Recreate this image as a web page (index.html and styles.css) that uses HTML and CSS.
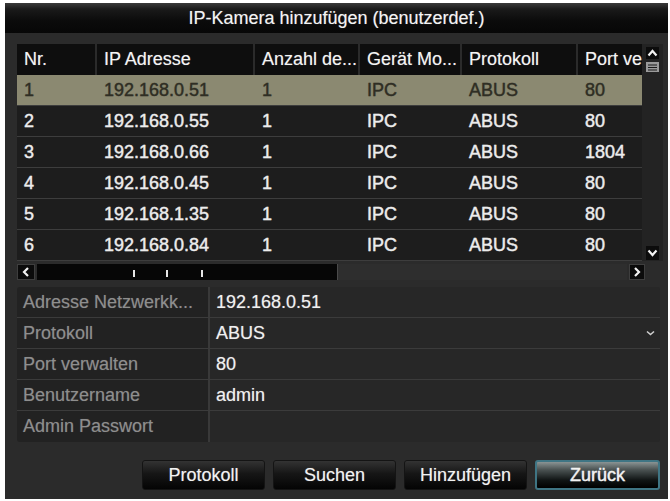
FILE: index.html
```html
<!DOCTYPE html>
<html lang="de">
<head>
<meta charset="utf-8">
<title>IP-Kamera hinzufügen</title>
<link rel="stylesheet" href="styles.css">
</head>
<body>
<div class="win">
  <div class="titlebar">IP-Kamera hinzufügen (benutzerdef.)</div>
  <div class="content">
    <div class="list">
      <div class="grid">
        <div class="row head">
          <div class="c">Nr.</div>
          <div class="c">IP Adresse</div>
          <div class="c">Anzahl de...</div>
          <div class="c">Gerät Mo...</div>
          <div class="c">Protokoll</div>
          <div class="c">Port ve</div>
        </div>
        <div class="row sel">
          <div class="c">1</div><div class="c">192.168.0.51</div><div class="c">1</div><div class="c">IPC</div><div class="c">ABUS</div><div class="c">80</div>
        </div>
        <div class="row">
          <div class="c">2</div><div class="c">192.168.0.55</div><div class="c">1</div><div class="c">IPC</div><div class="c">ABUS</div><div class="c">80</div>
        </div>
        <div class="row">
          <div class="c">3</div><div class="c">192.168.0.66</div><div class="c">1</div><div class="c">IPC</div><div class="c">ABUS</div><div class="c">1804</div>
        </div>
        <div class="row">
          <div class="c">4</div><div class="c">192.168.0.45</div><div class="c">1</div><div class="c">IPC</div><div class="c">ABUS</div><div class="c">80</div>
        </div>
        <div class="row">
          <div class="c">5</div><div class="c">192.168.1.35</div><div class="c">1</div><div class="c">IPC</div><div class="c">ABUS</div><div class="c">80</div>
        </div>
        <div class="row">
          <div class="c">6</div><div class="c">192.168.0.84</div><div class="c">1</div><div class="c">IPC</div><div class="c">ABUS</div><div class="c">80</div>
        </div>
      </div>
      <div class="vscroll">
        <div class="sbtn up">
          <svg width="11" height="8" viewBox="0 0 11 8"><path d="M1.5 6.5 L5.5 2 L9.5 6.5" fill="none" stroke="#f2f2f2" stroke-width="2.2"/></svg>
        </div>
        <div class="vthumb">
          <svg width="9" height="7" viewBox="0 0 9 7"><path d="M0 1H9M0 3.5H9M0 6H9" stroke="#1a1a1a" stroke-width="1.2"/></svg>
        </div>
        <div class="vspace"></div>
        <div class="sbtn down">
          <svg width="11" height="8" viewBox="0 0 11 8"><path d="M1.5 1.5 L5.5 6 L9.5 1.5" fill="none" stroke="#f2f2f2" stroke-width="2.2"/></svg>
        </div>
      </div>
    </div>
    <div class="hscroll">
      <div class="hbtn">
        <svg width="8" height="10" viewBox="0 0 8 10"><path d="M6 1 L2 5 L6 9" fill="none" stroke="#f2f2f2" stroke-width="2.2"/></svg>
      </div>
      <div class="hthumb">
        <span class="tick t1"></span><span class="tick t2"></span><span class="tick t3"></span>
      </div>
      <div class="htrack"></div>
      <div class="hbtn">
        <svg width="8" height="10" viewBox="0 0 8 10"><path d="M2 1 L6 5 L2 9" fill="none" stroke="#f2f2f2" stroke-width="2.2"/></svg>
      </div>
    </div>
    <div class="form">
      <div class="frow"><div class="lab">Adresse Netzwerkk...</div><div class="val">192.168.0.51</div></div>
      <div class="frow"><div class="lab">Protokoll</div><div class="val">ABUS<svg class="dd" width="9" height="6" viewBox="0 0 9 6"><path d="M1 1.5 L4.5 4.5 L8 1.5" fill="none" stroke="#cfcfcf" stroke-width="1.6"/></svg></div></div>
      <div class="frow"><div class="lab">Port verwalten</div><div class="val">80</div></div>
      <div class="frow"><div class="lab">Benutzername</div><div class="val">admin</div></div>
      <div class="frow"><div class="lab">Admin Passwort</div><div class="val"></div></div>
    </div>
    <div class="buttons">
      <div class="btn">Protokoll</div>
      <div class="btn">Suchen</div>
      <div class="btn">Hinzufügen</div>
      <div class="btn active">Zurück</div>
    </div>
  </div>
</div>
</body>
</html>
```
FILE: styles.css
```css
html, body {
  margin: 0;
  padding: 0;
  background: #ffffff;
}
body {
  padding: 3px 2px 2px 5px;
  font-family: "Liberation Sans", Arial, sans-serif;
  font-size: 18px;
  color: #ececec;
}
.win {
  width: 663px;
  height: 496px;
  background: #2b2b2b;
  display: flex;
  flex-direction: column;
}
.titlebar {
  height: 30px;
  line-height: 30px;
  text-align: center;
  color: #f4f4f4;
  background: linear-gradient(#3a3a3a 0, #1a1a1a 20%, #0b0b0b 60%, #070707 100%);
  text-shadow: 0 0 1px rgba(255,255,255,0.4);
}
.content {
  padding: 11px 0 0 12px;
  display: flex;
  flex-direction: column;
}
.list {
  display: flex;
}
.grid {
  width: 625px;
  display: flex;
  flex-direction: column;
}
.row {
  display: grid;
  grid-template-columns: 80px 158px 105px 102px 116px 64px;
  height: 30px;
  border-bottom: 1px solid #3d3d3d;
  background: #1d1d1d;
  align-items: center;
}
.row .c {
  padding-left: 7px;
  white-space: nowrap;
  overflow: hidden;
  -webkit-text-stroke: 0.3px currentColor;
  text-shadow: 0 0 1px rgba(255,255,255,0.4);
}
.row.head {
  height: 31px;
  border-bottom: none;
  background: transparent;
  align-items: stretch;
}
.row.head .c {
  background: #0e0e0e;
  border-right: 2px solid #2b2b2b;
  display: flex;
  align-items: center;
  color: #f4f4f4;
  -webkit-text-stroke: 0;
}
.row.head .c:last-child {
  border-right: none;
}
.row.sel {
  background: #8b8971;
  color: #2f2e24;
}
.row.sel .c {
  text-shadow: 0 0 1px rgba(40,40,30,0.4);
}
.vscroll {
  width: 21px;
  background: #232323;
  display: flex;
  flex-direction: column;
  align-items: center;
  padding-top: 3px;
  box-sizing: border-box;
}
.sbtn {
  width: 13px;
  height: 12px;
  background: #0c0c0c;
  display: flex;
  align-items: center;
  justify-content: center;
}
.vthumb {
  width: 13px;
  height: 10px;
  margin-top: 3px;
  background: #9a9a9a;
  display: flex;
  align-items: center;
  justify-content: center;
}
.vspace {
  flex: 1;
}
.sbtn.down {
  margin-bottom: 1px;
  height: 14px;
}
.hscroll {
  margin-top: 3px;
  width: 628px;
  height: 16px;
  display: flex;
}
.hbtn {
  width: 18px;
  background: #0b0b0b;
  border: 1px solid #3e3e3e;
  box-sizing: border-box;
  display: flex;
  align-items: center;
  justify-content: center;
}
.hbtn:last-child {
  width: 16px;
  margin-left: 2px;
}
.hthumb {
  width: 300px;
  margin-left: 2px;
  background: #060606;
  position: relative;
}
.tick {
  position: absolute;
  top: 6px;
  width: 2px;
  height: 7px;
  background: #e6e6e6;
}
.t1 { left: 96px; }
.t2 { left: 129px; }
.t3 { left: 164px; }
.htrack {
  flex: 1;
  background: #2e2e2e;
  border-left: 1px solid #4a4a4a;
}
.form {
  margin-top: 7px;
  width: 643px;
  border-radius: 3px;
  overflow: hidden;
  display: flex;
  flex-direction: column;
}
.frow {
  display: flex;
  height: 30px;
  border-bottom: 1px solid #3b3b3b;
}
.frow:last-child {
  border-bottom: none;
  height: 31px;
}
.lab {
  width: 193px;
  background: #222222;
  border-right: 2px solid #393939;
  color: #8e8e8e;
  padding-left: 6px;
  box-sizing: border-box;
  display: flex;
  align-items: center;
  white-space: nowrap;
  text-shadow: 0 0 1px rgba(150,150,150,0.4);
}
.val {
  flex: 1;
  background: #272727;
  padding-left: 6px;
  display: flex;
  align-items: center;
  color: #f0f0f0;
  text-shadow: 0 0 1px rgba(255,255,255,0.45);
}
.dd {
  margin-left: auto;
  margin-right: 5px;
}
.buttons {
  margin-top: 18px;
  width: 643px;
  display: flex;
  justify-content: flex-end;
  gap: 8px;
}
.btn {
  width: 123px;
  height: 30px;
  box-sizing: border-box;
  border: 1px solid #141414;
  border-radius: 3px;
  background: linear-gradient(#333333 0, #161616 45%, #040404 100%);
  color: #f2f2f2;
  display: flex;
  align-items: center;
  justify-content: center;
  text-shadow: 0 0 1px rgba(255,255,255,0.45);
}
.btn.active {
  width: 125px;
  border: 2px solid #3f7584;
  background: linear-gradient(#8a9494 0, #4a5252 30%, #101414 70%, #000000 100%);
  -webkit-text-stroke: 0.3px currentColor;
}
```
